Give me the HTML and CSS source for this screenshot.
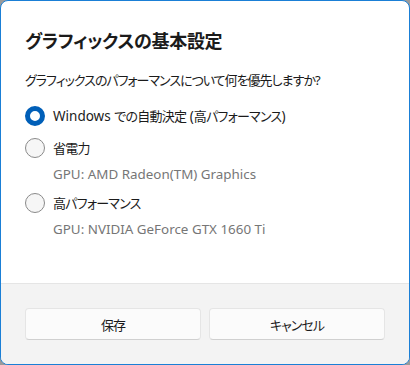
FILE: index.html
```html
<!DOCTYPE html>
<html lang="ja">
<head>
<meta charset="utf-8">
<title>グラフィックスの基本設定</title>
<link rel="stylesheet" href="styles.css">
</head>
<body>
<div class="dialog">
  <div class="content">
    <h1 class="title">グラフィックスの基本設定</h1>
    <p class="question">グラフィックスのパフォーマンスについて何を優先しますか<span class="latin">?</span></p>
    <div class="options">
      <div class="option">
        <div class="row"><span class="radio checked"></span><span class="label"><span class="latin">Windows </span>での自動決定<span class="latin"> (</span>高パフォーマンス<span class="latin">)</span></span></div>
      </div>
      <div class="option">
        <div class="row"><span class="radio"></span><span class="label">省電力</span></div>
        <div class="sub latin">GPU: AMD Radeon(TM) Graphics</div>
      </div>
      <div class="option">
        <div class="row"><span class="radio"></span><span class="label">高パフォーマンス</span></div>
        <div class="sub latin">GPU: NVIDIA GeForce GTX 1660 Ti</div>
      </div>
    </div>
  </div>
  <div class="footer">
    <button class="btn">保存</button>
    <button class="btn">キャンセル</button>
  </div>
</div>
</body>
</html>
```

FILE: styles.css
```css
html {
  background: #9a9a9a;
}
body {
  margin: 0;
  font-family: "Noto Sans CJK JP", sans-serif;
  font-feature-settings: "palt";
  color: #1b1b1b;
}
.latin {
  font-family: "Noto Sans", "Noto Sans CJK JP", sans-serif;
  font-feature-settings: normal;
  letter-spacing: 0;
}
.dialog {
  width: 410px;
  height: 365px;
  box-sizing: border-box;
  border: 1px solid #1a7fd6;
  border-radius: 8px;
  overflow: hidden;
  display: flex;
  flex-direction: column;
  background: #ffffff;
}
.content {
  flex: 1;
  padding: 25px 24px 0;
}
.title {
  margin: 0;
  font-size: 18px;
  line-height: 28px;
  font-weight: 600;
  letter-spacing: -0.3px;
}
.question {
  margin: 16px 0 0;
  font-size: 13px;
  line-height: 20px;
  letter-spacing: -1px;
}
.options {
  margin-top: 10px;
  display: flex;
  flex-direction: column;
}
.option + .option + .option {
  margin-top: 3px;
}
.row {
  height: 32px;
  display: flex;
  align-items: center;
  gap: 8px;
}
.radio {
  width: 20px;
  height: 20px;
  box-sizing: border-box;
  border-radius: 50%;
  border: 1px solid #8a8a8a;
  background: #f6f6f6;
  flex: none;
}
.radio.checked {
  border: 5px solid #005fb8;
  background: #ffffff;
}
.label {
  font-size: 13px;
  line-height: 20px;
  letter-spacing: -0.75px;
}
.label .latin {
  font-size: 13.5px;
}
.sub {
  padding-left: 28px;
  font-size: 13.4px;
  line-height: 20px;
  color: #767676;
}
.footer {
  background: #f3f3f3;
  border-top: 1px solid #e5e5e5;
  padding: 24px 24px;
  display: grid;
  grid-template-columns: 1fr 1fr;
  gap: 8px;
}
.btn {
  height: 32px;
  font-family: inherit;
  font-feature-settings: "palt";
  font-size: 13px;
  letter-spacing: -1px;
  color: #1b1b1b;
  background: #fbfbfb;
  border: 1px solid #e5e5e5;
  border-bottom-color: #d0d0d0;
  border-radius: 4px;
  padding: 0;
}
```
